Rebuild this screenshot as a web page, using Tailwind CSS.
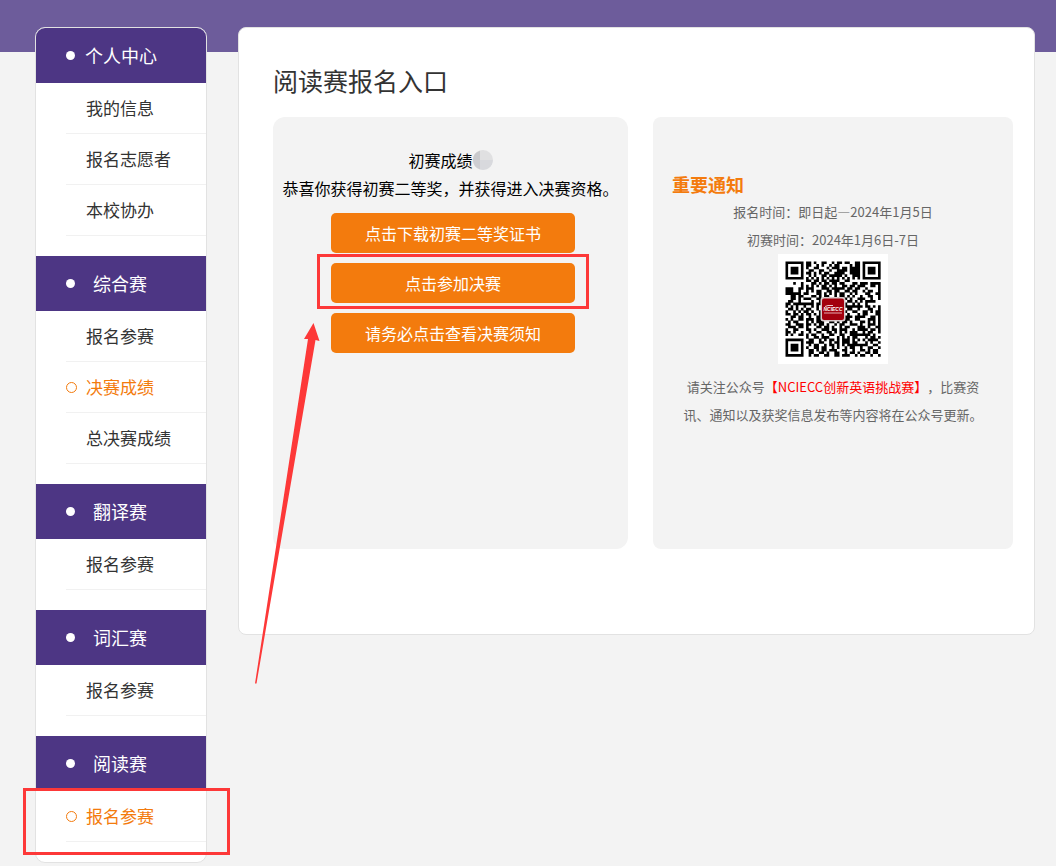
<!DOCTYPE html>
<html lang="zh-CN">
<head>
    <meta charset="UTF-8">
    <meta name="viewport" content="width=device-width, initial-scale=1.0">
    <title>阅读赛报名入口</title>
    <script src="https://cdn.jsdelivr.net/npm/@tailwindcss/browser@4"></script>
</head>
<body class="relative bg-[#f3f3f3] font-['Noto_Sans_CJK_SC',sans-serif] text-[#333] [text-spacing-trim:space-all]">
    <div class="absolute inset-x-0 top-0 h-[52px] bg-[#6d5c9b]"></div>

    <div class="relative flex items-start gap-[31px] pt-[27px] pl-[35px] pr-[21px]">
        <!-- Sidebar -->
        <nav class="w-[172px] shrink-0 rounded-[10px] border border-[#e2e2e2] bg-white text-[17px]">
            <section class="pb-5">
                <h2 class="flex h-[55px] items-center gap-[10px] rounded-t-[9px] bg-[#4d3684] pl-[30px] text-[18px] text-white">
                    <span class="size-[9px] rounded-full bg-white"></span>个人中心
                </h2>
                <ul class="pl-[30px]">
                    <li class="border-b border-[#f1f1f1]"><a href="#" class="block pl-5 leading-[50px]">我的信息</a></li>
                    <li class="border-b border-[#f1f1f1]"><a href="#" class="block pl-5 leading-[50px]">报名志愿者</a></li>
                    <li class="border-b border-[#f1f1f1]"><a href="#" class="block pl-5 leading-[50px]">本校协办</a></li>
                </ul>
            </section>
            <section class="pb-5">
                <h2 class="flex h-[55px] items-center gap-[18px] bg-[#4d3684] pl-[30px] text-[18px] text-white">
                    <span class="size-[9px] rounded-full bg-white"></span>综合赛
                </h2>
                <ul class="pl-[30px]">
                    <li class="border-b border-[#f1f1f1]"><a href="#" class="block pl-5 leading-[50px]">报名参赛</a></li>
                    <li class="border-b border-[#f1f1f1]">
                        <a href="#" class="flex items-center gap-[9px] leading-[50px] text-[#f37b0d]">
                            <span class="size-[11px] rounded-full border border-[#f37b0d]"></span>决赛成绩
                        </a>
                    </li>
                    <li class="border-b border-[#f1f1f1]"><a href="#" class="block pl-5 leading-[50px]">总决赛成绩</a></li>
                </ul>
            </section>
            <section class="pb-5">
                <h2 class="flex h-[55px] items-center gap-[18px] bg-[#4d3684] pl-[30px] text-[18px] text-white">
                    <span class="size-[9px] rounded-full bg-white"></span>翻译赛
                </h2>
                <ul class="pl-[30px]">
                    <li class="border-b border-[#f1f1f1]"><a href="#" class="block pl-5 leading-[50px]">报名参赛</a></li>
                </ul>
            </section>
            <section class="pb-5">
                <h2 class="flex h-[55px] items-center gap-[18px] bg-[#4d3684] pl-[30px] text-[18px] text-white">
                    <span class="size-[9px] rounded-full bg-white"></span>词汇赛
                </h2>
                <ul class="pl-[30px]">
                    <li class="border-b border-[#f1f1f1]"><a href="#" class="block pl-5 leading-[50px]">报名参赛</a></li>
                </ul>
            </section>
            <section class="pb-5">
                <h2 class="flex h-[55px] items-center gap-[18px] bg-[#4d3684] pl-[30px] text-[18px] text-white">
                    <span class="size-[9px] rounded-full bg-white"></span>阅读赛
                </h2>
                <ul class="relative pl-[30px]">
                    <li class="border-b border-[#f1f1f1]">
                        <a href="#" class="flex items-center gap-[9px] leading-[50px] text-[#f37b0d]">
                            <span class="size-[11px] rounded-full border border-[#f37b0d]"></span>报名参赛
                        </a>
                    </li>
                    <li class="pointer-events-none absolute -top-[3px] -right-[24px] -bottom-[13px] -left-[13px] border-3 border-[#fd3838]" aria-hidden="true"></li>
                </ul>
            </section>
        </nav>

        <!-- Content -->
        <main class="min-w-0 flex-1 rounded-[8px] border border-[#e2e2e2] bg-white pt-8 pr-[21px] pb-[85px] pl-[34px]">
            <h1 class="mb-[17px] text-[25px] leading-[40px]">阅读赛报名入口</h1>
            <div class="flex gap-[25px]">
                <section class="relative min-h-[432px] min-w-0 flex-[355] rounded-[12px] bg-[#f3f3f3] pt-[29px] text-center text-black">
                    <p class="flex items-center justify-center leading-[28px]">初赛成绩
                        <svg class="size-5" viewBox="0 0 20 20" aria-hidden="true">
                            <path d="M10 0A10 10 0 0 1 20 10H7V0.5Q8.500 0 10 0Z" fill="#e0e0e1"/>
                            <path d="M7 0.500V10H0A10 10 0 0 1 7 0.500Z" fill="#c9c9cc"/>
                            <path d="M0 10H7V19.500A10 10 0 0 1 0 10Z" fill="#ceced2"/>
                            <path d="M7 10H20A10 10 0 0 1 7 19.500Z" fill="#d8d9dd"/>
                        </svg>
                    </p>
                    <p class="leading-[28px]">恭喜你获得初赛二等奖&#xFF0C;并获得进入决赛资格。</p>
                    <div class="mt-[11px] flex flex-col items-center gap-[10px] pl-[5px]">
                        <button type="button" class="h-10 w-[244px] rounded-[5px] bg-[#f37b0d] text-white">点击下载初赛二等奖证书</button>
                        <div class="relative">
                            <button type="button" class="h-10 w-[244px] rounded-[5px] bg-[#f37b0d] text-white">点击参加决赛</button>
                            <span class="pointer-events-none absolute -inset-x-[14px] -top-[9px] -bottom-[6px] border-3 border-[#fd3838]"></span>
                        </div>
                        <button type="button" class="h-10 w-[244px] rounded-[5px] bg-[#f37b0d] text-white">请务必点击查看决赛须知</button>
                    </div>
                    <svg class="pointer-events-none absolute top-[206px] -left-[18px] h-[361px] w-[66px]" viewBox="0 0 66 361" aria-hidden="true">
                        <path d="M58.500 0L64.500 18L60.500 17L1.500 360.500H0L53 16H49Z" fill="#fd3838"/>
                    </svg>
                </section>

                <section class="min-h-[432px] min-w-0 flex-[360] rounded-[8px] bg-[#f3f3f3] pt-[53px] text-center text-[13px] leading-[28px] text-[#666]">
                    <h2 class="pl-[19px] text-left text-[18px] font-bold text-[#f37b0d]">重要通知</h2>
                    <p>报名时间&#xFF1A;即日起—2024年1月5日</p>
                    <p>初赛时间&#xFF1A;2024年1月6日-7日</p>
                    <svg class="mx-auto size-[110px]" viewBox="0 0 110 110" role="img" aria-label="公众号二维码">
                        <rect width="110" height="110" fill="#fff"/>
                        <g transform="translate(7.500 7.500) scale(2.570)"><path id="qr" fill="#000"/></g>
                        <rect x="42.500" y="43" width="25" height="24.500" rx="3" fill="#d8cccd"/>
                        <rect x="44" y="44.500" width="22" height="21.500" rx="2" fill="#a3000e"/>
                        <text x="55" y="57" text-anchor="middle" font-family="Liberation Sans" font-size="5" font-weight="bold" font-style="italic" fill="#fff">NCIECC</text>
                        <path d="M47 52.500L50 51.500H55" fill="none" stroke="#fff" stroke-width="0.800"/>
                        <path d="M46 59H64" stroke="#e3a9ad" stroke-width="1"/>
                    </svg>
                    <p class="mx-auto mt-[9px] w-[302px]">请关注公众号<span class="text-[#f00]">【NCIECC创新英语挑战赛】</span>&#xFF0C;比赛资讯、通知以及获奖信息发布等内容将在公众号更新。</p>
                </section>
            </div>
        </main>
    </div>

    <script>
        // one string per module row, # is a dark module
        const rows = [
            '#######.##.#..##..#.##.##..##.#######',
            '#.....#.##..#.#..#.##....#.##.#.....#',
            '#.###.#.#..##...#.###.##.####.#.###.#',
            '#.###.#..##..##..#..####.####.#.###.#',
            '#.###.#.##.#.#.##..####..####.#.###.#',
            '#.....#..#.#..##.#####.#..###.#.....#',
            '#######.#.#.#.#.#.#.#.#.#.#.#.#######',
            '........##.##.##.####..##............',
            '...#..#...##.#.##.##.##...##.###.####',
            '......#.#.#.#.##.#.#..##.##.###..##.#',
            '###..##.###...###.#####.##.##..#....#',
            '###..#..#.#.##..##.##..##.##..#.##..#',
            '######.##...##.#.#.#.##..#.#...##..##',
            '..##.##...##.#.##..#.##.#.#..#..##..#',
            '..##.#.###..##.........#.#..###..#..#',
            '.##..#....#..#..........##.#.#.####..',
            '##.########.##.........#..#.#..#.....',
            '#.#.#..#..#.#..........#######.##.#.#',
            '.##.#.#.##..#...........##..#...##..#',
            '#..#.#.##.#..#.........#..##..##.#.##',
            '##.##.#.##.#.#..........#...#.##...##',
            '..##.##..#..##.........###.####..##.#',
            '#.#..##.###.##.........##..##...###.#',
            '.#.##...#.#.###..##.#.##.#...##.#.#.#',
            '##..###.##.#.##.#..#.##..###.#..###.#',
            '.###.##.#...##.##.#..#.##...###.#..##',
            '#..##...##.#..###.##.###..#.####.##.#',
            '##.#..#..#..##..##.#.#.#.###..#.##..#',
            '#.#..##.#.##..#..##..##..########.#..',
            '........#..##.###...#.#.#.##...#.##.#',
            '#######..##..#.#.##.#.###.#.#.#.####.',
            '#.....#.###..##..#.##.###.##...#.#..#',
            '#.###.#..#.##..#.##.#.#.########..##.',
            '#.###.#.#..##.##..#.#..#.##..#..##..#',
            '#.###.#..##.#.##.###..##..#..##.#.##.',
            '#.....#..##..##.#..##..#.##.#..##.##.',
            '#######..#.##..##..##.###..#.##..#..#'
        ];
        let d = '';
        rows.forEach((row, y) => {
            [...row].forEach((cell, x) => {
                if (cell === '#') d += `M${x} ${y}h1.02v1.02h-1.02z`;
            });
        });
        document.getElementById('qr').setAttribute('d', d);
    </script>
</body>
</html>
